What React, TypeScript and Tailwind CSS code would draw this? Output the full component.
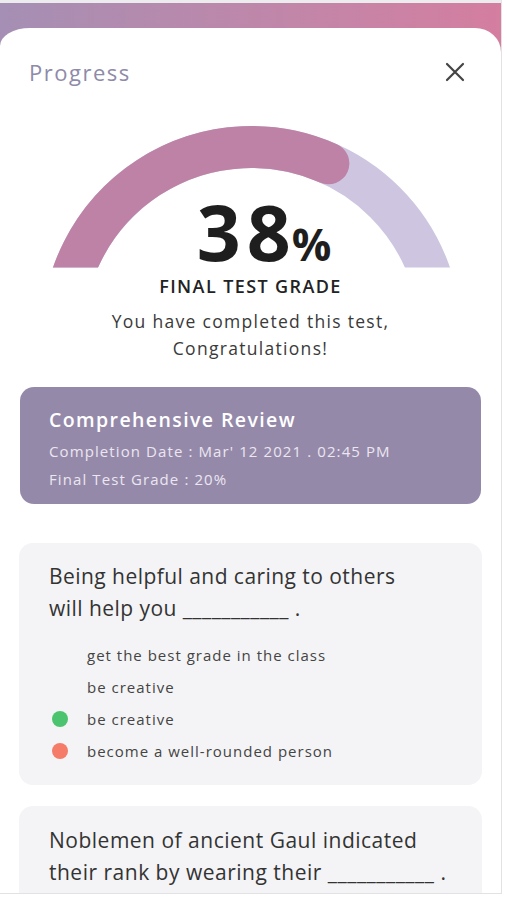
import React from "react";

function Gauge() {
  // svg placed at page x 52..452, y 124..269 (width 400, height 145)
  const cx = 199.5;
  const cy = 212;
  const r = 189;
  const pt = (deg: number) => {
    const a = (deg * Math.PI) / 180;
    return [cx + r * Math.cos(a), cy - r * Math.sin(a)];
  };
  const [sx, sy] = pt(180);
  const [ex, ey] = pt(0);
  const [px, py] = pt(66);
  return (
    <svg width="400" height="145" viewBox="0 0 400 145" className="block">
      <defs>
        <clipPath id="gclip">
          <rect x="0" y="0" width="400" height="143.5" />
        </clipPath>
      </defs>
      <g clipPath="url(#gclip)" fill="none" strokeWidth="42">
        <path d={`M ${sx} ${sy} A ${r} ${r} 0 0 1 ${ex} ${ey}`} stroke="#cec6e1" />
        <path
          d={`M ${sx} ${sy} A ${r} ${r} 0 0 1 ${px} ${py}`}
          stroke="#bd82a6"
          strokeLinecap="round"
        />
      </g>
    </svg>
  );
}

function Option({ text, dot }: { text: string; dot?: "green" | "red" }) {
  return (
    <div className="flex items-center h-[32px]">
      <div className="w-[38px] flex items-center">
        {dot === "green" && <span className="ml-[3px] w-[16px] h-[16px] rounded-full bg-[#4cc46f]" />}
        {dot === "red" && <span className="ml-[3px] w-[16px] h-[16px] rounded-full bg-[#f47c68]" />}
      </div>
      <span className="text-[15px] tracking-[1px] text-[#444]">{text}</span>
    </div>
  );
}

export default function App() {
  return (
    <div
      className="w-[507px] h-[900px] bg-white overflow-hidden"
      style={{ fontFamily: '"Open Sans", "Noto Sans", sans-serif' }}
    >
      <div className="w-[502px] h-[894px] border-r border-b border-[#e2e2e4] bg-[#f4f4f6] flex flex-col overflow-hidden">
        <div className="h-[3px] bg-[#ececee] shrink-0" />
        <div className="bg-gradient-to-r from-[#a58fb4] to-[#d47ea0] pt-[25px] shrink-0 flex-1 flex flex-col">
          <div className="bg-white rounded-tl-[30px_18px] rounded-tr-[26px_24px] flex-1 flex flex-col w-[501px]">
            {/* header */}
            <div className="flex items-center justify-between pl-[29px] pr-[36px] pt-[30px] h-[28px] box-content">
              <span className="text-[22px] leading-[28px] tracking-[1.5px] text-[#8e8aa9]">Progress</span>
              <svg width="20" height="20" viewBox="0 0 20 20" className="block">
                <path d="M2 2 L18 18 M18 2 L2 18" stroke="#444" strokeWidth="2.2" strokeLinecap="round" />
              </svg>
            </div>

            {/* gauge */}
            <div className="relative mt-[38px] ml-[52px] w-[400px] h-[145px]">
              <Gauge />
              <div className="absolute left-0 right-0 top-[78px] h-[60px] pl-[24px] flex justify-center items-baseline text-[#1e1e1e] font-bold">
                <span className="block text-[77px] leading-[60px] mr-[6px]">3</span>
                <span className="block text-[77px] leading-[60px]">8</span>
                <span className="block text-[44px] leading-[34px] ml-[1px]">%</span>
              </div>
            </div>

            <div className="mt-[5px] text-center text-[18px] leading-[24px] tracking-[1.4px] text-[#222] font-semibold">
              FINAL TEST GRADE
            </div>
            <div className="mt-[10px] text-center text-[17.5px] leading-[27px] tracking-[1.3px] text-[#3a3a3a]">
              You have completed this test,
              <br />
              Congratulations!
            </div>

            {/* summary card */}
            <div className="mt-[25px] mx-[20px] w-[461px] h-[117px] rounded-[14px] bg-[#9589aa] px-[29px] pt-[20px]">
              <div className="text-[19.5px] leading-[26px] tracking-[1.4px] font-semibold text-white">
                Comprehensive Review
              </div>
              <div className="mt-[4px] text-[15px] leading-[28px] tracking-[1.1px] text-[#ebe6f0]">
                Completion Date : Mar' 12 2021 . 02:45 PM
              </div>
              <div className="text-[15px] leading-[28px] tracking-[1.1px] text-[#ebe6f0]">Final Test Grade : 20%</div>
            </div>

            {/* question 1 */}
            <div className="mt-[39px] mx-[19px] w-[463px] h-[242px] rounded-[14px] bg-[#f4f4f6] pl-[30px] pt-[17px]">
              <div className="text-[21px] leading-[32px] tracking-[0.45px] text-[#333]">
                Being helpful and caring to others
                <br />
                will help you ___________ .
              </div>
              <div className="mt-[15px] flex flex-col">
                <Option text="get the best grade in the class" />
                <Option text="be creative" />
                <Option text="be creative" dot="green" />
                <Option text="become a well-rounded person" dot="red" />
              </div>
            </div>

            {/* question 2 */}
            <div className="mt-[21px] mx-[19px] w-[463px] flex-1 rounded-t-[14px] bg-[#f4f4f6] pl-[30px] pt-[18px]">
              <div className="text-[21px] leading-[32px] tracking-[0.5px] text-[#333]">
                Noblemen of ancient Gaul indicated
                <br />
                their rank by wearing their ___________ .
              </div>
            </div>
          </div>
        </div>
      </div>
    </div>
  );
}
